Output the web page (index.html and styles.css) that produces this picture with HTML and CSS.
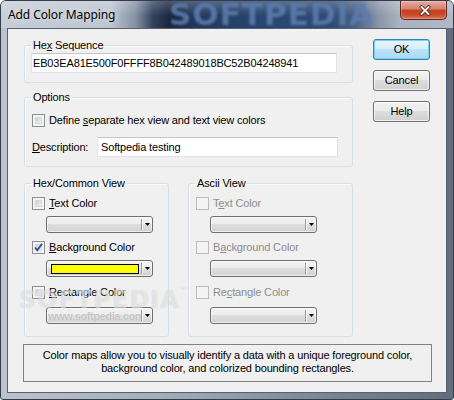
FILE: index.html
```html
<!DOCTYPE html>
<html>
<head>
<meta charset="utf-8">
<title>Add Color Mapping</title>
<link rel="stylesheet" href="styles.css">
</head>
<body>
<div class="window">
  <div class="titlebar">
    <span class="title">Add Color Mapping</span>
    <span class="title-mark">SOFTPEDIA</span>
    <div class="close">
      <svg width="12" height="11" viewBox="0 0 12 11"><path d="M2.5 2 L9.5 9 M9.5 2 L2.5 9" stroke="#4a1c14" stroke-width="3.4" stroke-linecap="square" fill="none"/><path d="M2.5 2 L9.5 9 M9.5 2 L2.5 9" stroke="#ffffff" stroke-width="1.9" stroke-linecap="square" fill="none"/></svg>
    </div>
  </div>
  <div class="client">
    <div class="top">
      <div class="main">
        <fieldset class="group hex">
          <legend>He<u>x</u> Sequence</legend>
          <div class="edit hex-edit">EB03EA81E500F0FFFF8B042489018BC52B04248941</div>
        </fieldset>
        <fieldset class="group options">
          <legend>Options</legend>
          <div class="check-row opt-row"><span class="cb"></span><span class="lbl">Define <u>s</u>eparate hex view and text view colors</span></div>
          <div class="desc-row"><span class="desc-label"><u>D</u>escription:</span><div class="edit desc-edit">Softpedia testing</div></div>
        </fieldset>
        <div class="views">
          <fieldset class="group view common">
            <legend>Hex/Common View</legend>
            <div class="check-row r1"><span class="cb"></span><span class="lbl"><u>T</u>ext Color</span></div>
            <div class="combo c1"><span class="combo-field"></span><span class="combo-sep"></span><span class="combo-arrow"><svg width="5" height="3" viewBox="0 0 5 3"><path d="M0 0H5L2.5 3Z" fill="#000"/></svg></span></div>
            <div class="check-row r2"><span class="cb checked"><svg width="11" height="11" viewBox="0 0 11 11"><path d="M2 5.5 L4.3 8.2 L9 1.8" stroke="#2f4f9a" stroke-width="1.9" fill="none"/></svg></span><span class="lbl"><u>B</u>ackground Color</span></div>
            <div class="combo c2"><span class="combo-field"><span class="swatch"></span></span><span class="combo-sep"></span><span class="combo-arrow"><svg width="5" height="3" viewBox="0 0 5 3"><path d="M0 0H5L2.5 3Z" fill="#000"/></svg></span></div>
            <div class="check-row r3"><span class="cb"></span><span class="lbl"><u>R</u>ectangle Color</span></div>
            <div class="combo c3"><span class="combo-field"><span class="wm-url">www.softpedia.com</span></span><span class="combo-sep"></span><span class="combo-arrow"><svg width="5" height="3" viewBox="0 0 5 3"><path d="M0 0H5L2.5 3Z" fill="#000"/></svg></span></div>
            <span class="wm-big">SOFTPEDIA<sup>™</sup></span>
          </fieldset>
          <fieldset class="group view ascii">
            <legend>Ascii View</legend>
            <div class="check-row r1 disabled"><span class="cb"></span><span class="lbl">T<u>e</u>xt Color</span></div>
            <div class="combo c1"><span class="combo-field"></span><span class="combo-sep"></span><span class="combo-arrow"><svg width="5" height="3" viewBox="0 0 5 3"><path d="M0 0H5L2.5 3Z" fill="#000"/></svg></span></div>
            <div class="check-row r2 disabled"><span class="cb"></span><span class="lbl">B<u>a</u>ckground Color</span></div>
            <div class="combo c2"><span class="combo-field"></span><span class="combo-sep"></span><span class="combo-arrow"><svg width="5" height="3" viewBox="0 0 5 3"><path d="M0 0H5L2.5 3Z" fill="#000"/></svg></span></div>
            <div class="check-row r3 disabled"><span class="cb"></span><span class="lbl">Re<u>c</u>tangle Color</span></div>
            <div class="combo c3"><span class="combo-field"></span><span class="combo-sep"></span><span class="combo-arrow"><svg width="5" height="3" viewBox="0 0 5 3"><path d="M0 0H5L2.5 3Z" fill="#000"/></svg></span></div>
          </fieldset>
        </div>
      </div>
      <div class="buttons">
        <div class="btn default">OK</div>
        <div class="btn">Cancel</div>
        <div class="btn">Help</div>
      </div>
    </div>
    <div class="info">
      Color maps allow you to visually identify a data with a unique foreground color,<br>
      background color, and colorized bounding rectangles.
    </div>
  </div>
</div>
</body>
</html>
```

FILE: styles.css
```css
* { box-sizing: border-box; }
html, body { margin: 0; padding: 0; }
body {
  width: 454px;
  height: 400px;
  overflow: hidden;
  background: #ffffff;
  font-family: "Liberation Sans", Arial, sans-serif;
  font-size: 11px;
  letter-spacing: -0.15px;
  color: #000;
}
u { text-decoration: underline; text-underline-offset: 1px; }

.window {
  width: 454px;
  height: 400px;
  border: 1px solid #323c4b;
  border-radius: 6px 6px 3px 3px;
  background: linear-gradient(to right, #bac3ce 0%, #a4aebb 35%, #7c8695 70%, #626c7b 100%);
  display: flex;
  flex-direction: column;
  overflow: hidden;
}

.titlebar {
  height: 27px;
  flex: none;
  display: flex;
  align-items: flex-start;
  position: relative;
  background:
    linear-gradient(to bottom, rgba(255,255,255,0.22), rgba(255,255,255,0) 55%),
    linear-gradient(to right, #c6ced8 0px, #bcc5d0 110px, #8390a3 135px, #33425c 152px, #1a2740 168px, #22375b 190px, #2a4670 260px, #2f4b74 330px, #4a6284 355px, #8a97a8 378px, #a9b2be 398px, #b0b8c3 454px);
}
.title {
  margin: 6px 0 0 7px;
  line-height: 16px;
  font-family: "Noto Sans", "Open Sans", sans-serif;
  font-size: 12px;
  letter-spacing: -0.1px;
  color: #000;
  text-shadow: 0 0 6px rgba(255,255,255,0.8);
  position: relative;
  z-index: 1;
}
.title-mark {
  position: absolute;
  left: 168px;
  top: -5px;
  font-family: "DejaVu Sans", sans-serif;
  font-weight: bold;
  font-size: 31px;
  letter-spacing: 1px;
  color: #5d7dad;
  filter: blur(1.2px);
  opacity: 0.85;
}
.close {
  margin-left: auto;
  margin-right: 6px;
  width: 47px;
  height: 19px;
  border: 1px solid #5b2620;
  border-top: none;
  border-radius: 0 0 5px 5px;
  background: linear-gradient(to bottom, #e6aca0 0%, #d7806c 45%, #c4401f 50%, #c8492a 75%, #d9765a 100%);
  box-shadow: inset 0 0 0 1px rgba(255,255,255,0.25);
  display: flex;
  align-items: center;
  justify-content: center;
  padding-left: 3px;
  position: relative;
  z-index: 1;
}

.client {
  flex: 1;
  margin: 0 6px 6px 6px;
  border: 1px solid #56606f;
  background: #f0f0f0;
  padding-top: 10px;
  position: relative;
}
.top {
  display: flex;
  padding-left: 16px;
}
.main { width: 329px; }

.group {
  margin: 0;
  padding: 0 6px 0 6px;
  min-width: 0;
  border: 1px solid #d5dfe5;
  border-radius: 3px;
  box-shadow: inset 1px 1px 0 #fbfbfb;
}
.group legend {
  padding: 0 2px;
  line-height: 13px;
  font-size: 11px;
}
.hex { padding-bottom: 9px; }
.options { margin-top: 8px; padding-bottom: 9px; }

.edit {
  background: #fff;
  border: 1px solid #e2e3ea;
  border-top-color: #c3c6cd;
  height: 20px;
  line-height: 18px;
  white-space: nowrap;
  overflow: hidden;
}
.hex-edit { width: 306px; margin-top: 1px; padding-left: 1px; }

.check-row {
  display: flex;
  align-items: center;
  height: 13px;
  margin-left: 1px;
}
.check-row .lbl { margin-left: 4px; line-height: 13px; white-space: nowrap; }
.opt-row { margin-top: 10px; }

.cb {
  width: 13px;
  height: 13px;
  flex: none;
  border: 1px solid #8e8f8f;
  background: #f4f4f4;
  position: relative;
  display: flex;
  align-items: center;
  justify-content: center;
}
.cb::before {
  content: "";
  position: absolute;
  left: 2px; top: 2px; right: 2px; bottom: 2px;
  background: linear-gradient(135deg, #c9ccd1 0%, #e2e3e5 55%, #f6f6f6 100%);
  border: 1px solid #d8d9db;
}
.cb svg { position: relative; z-index: 1; }
.disabled .cb { border-color: #bcbcbc; }
.disabled .cb::before { background: #f4f4f4; border-color: #f4f4f4; }
.disabled .lbl { color: #8d8d8d; }

.desc-row {
  display: flex;
  align-items: center;
  margin-top: 10px;
  margin-left: 1px;
}
.desc-label { width: 65px; line-height: 13px; }
.desc-edit { width: 241px; padding-left: 3px; }

.views {
  display: flex;
  gap: 19px;
  margin-top: 10px;
}
.view { padding-bottom: 12px; position: relative; }
.common { width: 145px; }
.ascii { width: 165px; }
.view .r1 { margin-top: 7px; }
.view .r2 { margin-top: 8px; }
.view .r3 { margin-top: 9px; }

.combo {
  width: 107px;
  height: 17px;
  margin-left: 15px;
  margin-top: 6px;
  border: 1px solid #707070;
  border-radius: 3px;
  background: linear-gradient(to bottom, #f3f3f3 0%, #ececec 45%, #dedede 50%, #d2d2d2 100%);
  box-shadow: inset 0 0 0 1px rgba(255,255,255,0.6);
  display: flex;
  position: relative;
}
.view .c3 { margin-top: 8px; }
.combo-field {
  width: 94px;
  display: flex;
  align-items: center;
  overflow: hidden;
}
.combo-sep {
  width: 1px;
  margin: 2px 0;
  background: #9a9a9a;
  box-shadow: 1px 0 0 #fafafa;
}
.combo-arrow {
  flex: 1;
  display: flex;
  align-items: center;
  justify-content: center;
}
.swatch {
  width: 88px;
  height: 10px;
  margin-left: 4px;
  background: #ffff00;
  border: 1px solid #000;
}
.wm-url {
  margin-left: 1px;
  font-size: 11px;
  font-weight: bold;
  letter-spacing: -0.4px;
  color: #c4c4c4;
  text-shadow: 0 0 1px #fff;
  white-space: nowrap;
}
.wm-big {
  position: absolute;
  left: -6px;
  top: 96px;
  font-family: "DejaVu Sans", sans-serif;
  font-weight: bold;
  font-size: 24px;
  letter-spacing: 1px;
  color: rgba(255,255,255,0.55);
  text-shadow: 0 0 1px rgba(0,0,0,0.18);
  white-space: nowrap;
  pointer-events: none;
}
.wm-big sup { font-size: 8px; vertical-align: top; }

.buttons {
  margin-left: 20px;
  display: flex;
  flex-direction: column;
}
.btn {
  width: 57px;
  height: 21px;
  border: 1px solid #707070;
  border-radius: 3px;
  background: linear-gradient(to bottom, #f2f2f2 0%, #ebebeb 45%, #dddddd 50%, #cfcfcf 100%);
  box-shadow: inset 0 0 0 1px rgba(255,255,255,0.7);
  display: flex;
  align-items: center;
  justify-content: center;
  line-height: 13px;
}
.btn + .btn { margin-top: 10px; }
.btn.default {
  border-color: #3c7fb1;
  background: linear-gradient(to bottom, #e8f5fc 0%, #d8eefb 45%, #bde3f8 50%, #a9d8f3 100%);
  box-shadow: inset 0 0 0 1px #73d3fa;
}

.info {
  margin: 7px 0 0 15px;
  width: 409px;
  height: 38px;
  border: 1px solid #828282;
  padding-top: 4px;
  text-align: center;
  line-height: 13px;
}
```
